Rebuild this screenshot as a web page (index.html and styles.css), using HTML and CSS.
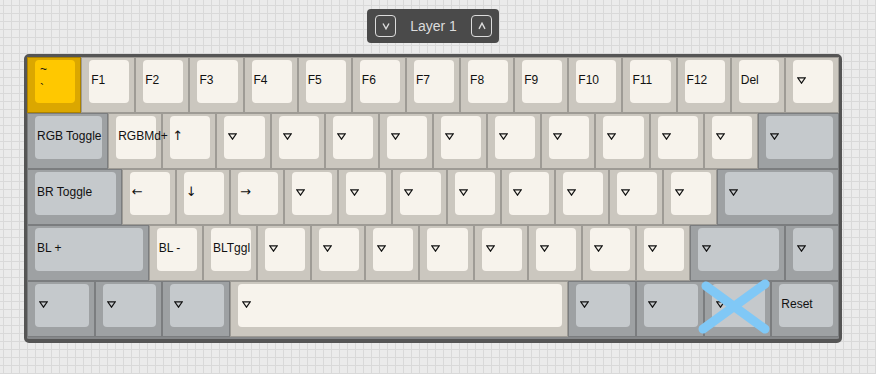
FILE: index.html
```html
<!DOCTYPE html>
<html lang="en">
<head>
  <meta charset="UTF-8" />
  <meta name="viewport" content="width=device-width, initial-scale=1.0">
  <title>Keymap editor</title>
  <link rel="stylesheet" href="styles.css">
</head>
<body>
<div class="page">
  <div class="layer-bar">
    <button class="layer-btn" type="button" aria-label="Previous layer">
      <svg viewBox="0 0 8 8" width="8" height="8"><polyline points="1,1.5 4,6.8 7,1.5"/></svg>
    </button>
    <span class="layer-name">Layer 1</span>
    <button class="layer-btn" type="button" aria-label="Next layer">
      <svg viewBox="0 0 8 8" width="8" height="8"><polyline points="1,6.8 4,1.2 7,6.8"/></svg>
    </button>
  </div>

  <div class="board">
    <!-- row 1 -->
    <div class="row">
      <div class="key accent"><div class="cap dual"><span class="legend">~</span><span class="legend">`</span></div></div>
      <div class="key"><div class="cap"><span class="legend">F1</span></div></div>
      <div class="key"><div class="cap"><span class="legend">F2</span></div></div>
      <div class="key"><div class="cap"><span class="legend">F3</span></div></div>
      <div class="key"><div class="cap"><span class="legend">F4</span></div></div>
      <div class="key"><div class="cap"><span class="legend">F5</span></div></div>
      <div class="key"><div class="cap"><span class="legend">F6</span></div></div>
      <div class="key"><div class="cap"><span class="legend">F7</span></div></div>
      <div class="key"><div class="cap"><span class="legend">F8</span></div></div>
      <div class="key"><div class="cap"><span class="legend">F9</span></div></div>
      <div class="key"><div class="cap"><span class="legend">F10</span></div></div>
      <div class="key"><div class="cap"><span class="legend">F11</span></div></div>
      <div class="key"><div class="cap"><span class="legend">F12</span></div></div>
      <div class="key"><div class="cap"><span class="legend">Del</span></div></div>
      <div class="key"><div class="cap"><svg class="tri" viewBox="0 0 9 7"><path d="M0.7 0.8H8.3L4.5 6.2Z"/></svg></div></div>
    </div>

    <!-- row 2 -->
    <div class="row">
      <div class="key mod w150"><div class="cap"><span class="legend">RGB Toggle</span></div></div>
      <div class="key"><div class="cap"><span class="legend">RGBMd+</span></div></div>
      <div class="key"><div class="cap"><span class="legend arrow">↑</span></div></div>
      <div class="key"><div class="cap"><svg class="tri" viewBox="0 0 9 7"><path d="M0.7 0.8H8.3L4.5 6.2Z"/></svg></div></div>
      <div class="key"><div class="cap"><svg class="tri" viewBox="0 0 9 7"><path d="M0.7 0.8H8.3L4.5 6.2Z"/></svg></div></div>
      <div class="key"><div class="cap"><svg class="tri" viewBox="0 0 9 7"><path d="M0.7 0.8H8.3L4.5 6.2Z"/></svg></div></div>
      <div class="key"><div class="cap"><svg class="tri" viewBox="0 0 9 7"><path d="M0.7 0.8H8.3L4.5 6.2Z"/></svg></div></div>
      <div class="key"><div class="cap"><svg class="tri" viewBox="0 0 9 7"><path d="M0.7 0.8H8.3L4.5 6.2Z"/></svg></div></div>
      <div class="key"><div class="cap"><svg class="tri" viewBox="0 0 9 7"><path d="M0.7 0.8H8.3L4.5 6.2Z"/></svg></div></div>
      <div class="key"><div class="cap"><svg class="tri" viewBox="0 0 9 7"><path d="M0.7 0.8H8.3L4.5 6.2Z"/></svg></div></div>
      <div class="key"><div class="cap"><svg class="tri" viewBox="0 0 9 7"><path d="M0.7 0.8H8.3L4.5 6.2Z"/></svg></div></div>
      <div class="key"><div class="cap"><svg class="tri" viewBox="0 0 9 7"><path d="M0.7 0.8H8.3L4.5 6.2Z"/></svg></div></div>
      <div class="key"><div class="cap"><svg class="tri" viewBox="0 0 9 7"><path d="M0.7 0.8H8.3L4.5 6.2Z"/></svg></div></div>
      <div class="key mod w150"><div class="cap"><svg class="tri" viewBox="0 0 9 7"><path d="M0.7 0.8H8.3L4.5 6.2Z"/></svg></div></div>
    </div>

    <!-- row 3 -->
    <div class="row">
      <div class="key mod w175"><div class="cap"><span class="legend">BR Toggle</span></div></div>
      <div class="key"><div class="cap"><span class="legend arrow">←</span></div></div>
      <div class="key"><div class="cap"><span class="legend arrow">↓</span></div></div>
      <div class="key"><div class="cap"><span class="legend arrow">→</span></div></div>
      <div class="key"><div class="cap"><svg class="tri" viewBox="0 0 9 7"><path d="M0.7 0.8H8.3L4.5 6.2Z"/></svg></div></div>
      <div class="key"><div class="cap"><svg class="tri" viewBox="0 0 9 7"><path d="M0.7 0.8H8.3L4.5 6.2Z"/></svg></div></div>
      <div class="key"><div class="cap"><svg class="tri" viewBox="0 0 9 7"><path d="M0.7 0.8H8.3L4.5 6.2Z"/></svg></div></div>
      <div class="key"><div class="cap"><svg class="tri" viewBox="0 0 9 7"><path d="M0.7 0.8H8.3L4.5 6.2Z"/></svg></div></div>
      <div class="key"><div class="cap"><svg class="tri" viewBox="0 0 9 7"><path d="M0.7 0.8H8.3L4.5 6.2Z"/></svg></div></div>
      <div class="key"><div class="cap"><svg class="tri" viewBox="0 0 9 7"><path d="M0.7 0.8H8.3L4.5 6.2Z"/></svg></div></div>
      <div class="key"><div class="cap"><svg class="tri" viewBox="0 0 9 7"><path d="M0.7 0.8H8.3L4.5 6.2Z"/></svg></div></div>
      <div class="key"><div class="cap"><svg class="tri" viewBox="0 0 9 7"><path d="M0.7 0.8H8.3L4.5 6.2Z"/></svg></div></div>
      <div class="key mod w225"><div class="cap"><svg class="tri" viewBox="0 0 9 7"><path d="M0.7 0.8H8.3L4.5 6.2Z"/></svg></div></div>
    </div>

    <!-- row 4 -->
    <div class="row">
      <div class="key mod w225"><div class="cap"><span class="legend">BL +</span></div></div>
      <div class="key"><div class="cap"><span class="legend">BL -</span></div></div>
      <div class="key"><div class="cap"><span class="legend">BLTggl</span></div></div>
      <div class="key"><div class="cap"><svg class="tri" viewBox="0 0 9 7"><path d="M0.7 0.8H8.3L4.5 6.2Z"/></svg></div></div>
      <div class="key"><div class="cap"><svg class="tri" viewBox="0 0 9 7"><path d="M0.7 0.8H8.3L4.5 6.2Z"/></svg></div></div>
      <div class="key"><div class="cap"><svg class="tri" viewBox="0 0 9 7"><path d="M0.7 0.8H8.3L4.5 6.2Z"/></svg></div></div>
      <div class="key"><div class="cap"><svg class="tri" viewBox="0 0 9 7"><path d="M0.7 0.8H8.3L4.5 6.2Z"/></svg></div></div>
      <div class="key"><div class="cap"><svg class="tri" viewBox="0 0 9 7"><path d="M0.7 0.8H8.3L4.5 6.2Z"/></svg></div></div>
      <div class="key"><div class="cap"><svg class="tri" viewBox="0 0 9 7"><path d="M0.7 0.8H8.3L4.5 6.2Z"/></svg></div></div>
      <div class="key"><div class="cap"><svg class="tri" viewBox="0 0 9 7"><path d="M0.7 0.8H8.3L4.5 6.2Z"/></svg></div></div>
      <div class="key"><div class="cap"><svg class="tri" viewBox="0 0 9 7"><path d="M0.7 0.8H8.3L4.5 6.2Z"/></svg></div></div>
      <div class="key mod w175"><div class="cap"><svg class="tri" viewBox="0 0 9 7"><path d="M0.7 0.8H8.3L4.5 6.2Z"/></svg></div></div>
      <div class="key mod"><div class="cap"><svg class="tri" viewBox="0 0 9 7"><path d="M0.7 0.8H8.3L4.5 6.2Z"/></svg></div></div>
    </div>

    <!-- row 5 -->
    <div class="row">
      <div class="key mod w125"><div class="cap"><svg class="tri" viewBox="0 0 9 7"><path d="M0.7 0.8H8.3L4.5 6.2Z"/></svg></div></div>
      <div class="key mod w125"><div class="cap"><svg class="tri" viewBox="0 0 9 7"><path d="M0.7 0.8H8.3L4.5 6.2Z"/></svg></div></div>
      <div class="key mod w125"><div class="cap"><svg class="tri" viewBox="0 0 9 7"><path d="M0.7 0.8H8.3L4.5 6.2Z"/></svg></div></div>
      <div class="key w625"><div class="cap"><svg class="tri" viewBox="0 0 9 7"><path d="M0.7 0.8H8.3L4.5 6.2Z"/></svg></div></div>
      <div class="key mod w125"><div class="cap"><svg class="tri" viewBox="0 0 9 7"><path d="M0.7 0.8H8.3L4.5 6.2Z"/></svg></div></div>
      <div class="key mod w125"><div class="cap"><svg class="tri" viewBox="0 0 9 7"><path d="M0.7 0.8H8.3L4.5 6.2Z"/></svg></div></div>
      <div class="key mod w125 crossed">
        <div class="cap"><svg class="tri" viewBox="0 0 9 7"><path d="M0.7 0.8H8.3L4.5 6.2Z"/></svg></div>
        <svg class="cross" viewBox="0 0 68 56" width="68" height="56">
          <line x1="2" y1="5" x2="61" y2="48"/>
          <line x1="61" y1="3" x2="-1" y2="48"/>
        </svg>
      </div>
      <div class="key mod w125"><div class="cap"><span class="legend">Reset</span></div></div>
    </div>
  </div>
</div>
</body>
</html>
```

FILE: styles.css
```css
body {
  margin: 0;
  font-family: "Liberation Sans", Arial, sans-serif;
  background-color: #ebebeb;
  background-image:
    linear-gradient(#d9d9d9 1px, transparent 1px),
    linear-gradient(90deg, #d9d9d9 1px, transparent 1px);
  background-size: 8px 8px;
  background-position: 3px 5px;
}
.page {
  width: 818px;
  margin-left: 24px;
  padding-top: 9px;
}
.layer-bar {
  display: flex;
  align-items: center;
  box-sizing: border-box;
  width: 132px;
  height: 34px;
  margin: 0 auto 11px;
  padding: 0 7px 0 8px;
  background: #4a4a4a;
  border-radius: 4px;
}
.layer-btn {
  display: flex;
  align-items: center;
  justify-content: center;
  box-sizing: border-box;
  width: 21px;
  height: 22px;
  padding: 0;
  background: transparent;
  border: 1px solid #dcdcdc;
  border-radius: 4px;
  cursor: pointer;
}
.layer-btn svg {
  fill: none;
  stroke: #dcdcdc;
  stroke-width: 1.4;
}
.layer-name {
  flex: 1;
  text-align: center;
  color: #dcdcdc;
  font-size: 14px;
}
.board {
  border: 3px solid #555;
  border-bottom-width: 4px;
  border-radius: 5px;
  background: #86888a;
  padding-bottom: 2px;
}
.row {
  display: grid;
  grid-template-columns: repeat(60, 1fr);
  height: 56px;
}
.key {
  grid-column: span 4;
  box-sizing: border-box;
  padding: 3px 6px 10px 8px;
  background: #cbc7bf;
  box-shadow: inset 0 0 0 1px rgba(0,0,0,0.22);
}
.key.w125 { grid-column: span 5; }
.key.w150 { grid-column: span 6; }
.key.w175 { grid-column: span 7; }
.key.w225 { grid-column: span 9; }
.key.w625 { grid-column: span 25; }
.key.mod { background: #9ea1a3; }
.key.accent { background: #dba700; }
.cap {
  display: flex;
  align-items: center;
  box-sizing: border-box;
  height: 100%;
  padding: 0 3px 3px 2px;
  background: #f7f3ec;
  border-radius: 4px;
  color: #111;
  font-size: 12px;
  line-height: 14px;
  white-space: nowrap;
}
.mod .cap { background: #c5c9cc; }
.accent .cap { background: #ffc800; }
.cap.dual {
  flex-direction: column;
  align-items: flex-start;
  justify-content: flex-start;
  gap: 5.5px;
  padding: 2px 0 0 5px;
}
.legend {
  position: relative;
  z-index: 1;
}
.legend.arrow {
  font-family: "DejaVu Sans", sans-serif;
  font-size: 13px;
  color: #111;
}
.tri {
  width: 9px;
  height: 7px;
  margin-left: 2px;
  fill: none;
  stroke: #111;
  stroke-width: 1.2;
}
.crossed { position: relative; }
.cross {
  position: absolute;
  left: 0;
  top: 0;
  overflow: visible;
  z-index: 2;
}
.cross line {
  stroke: #80c8f6;
  stroke-width: 9;
  stroke-linecap: round;
}
```
